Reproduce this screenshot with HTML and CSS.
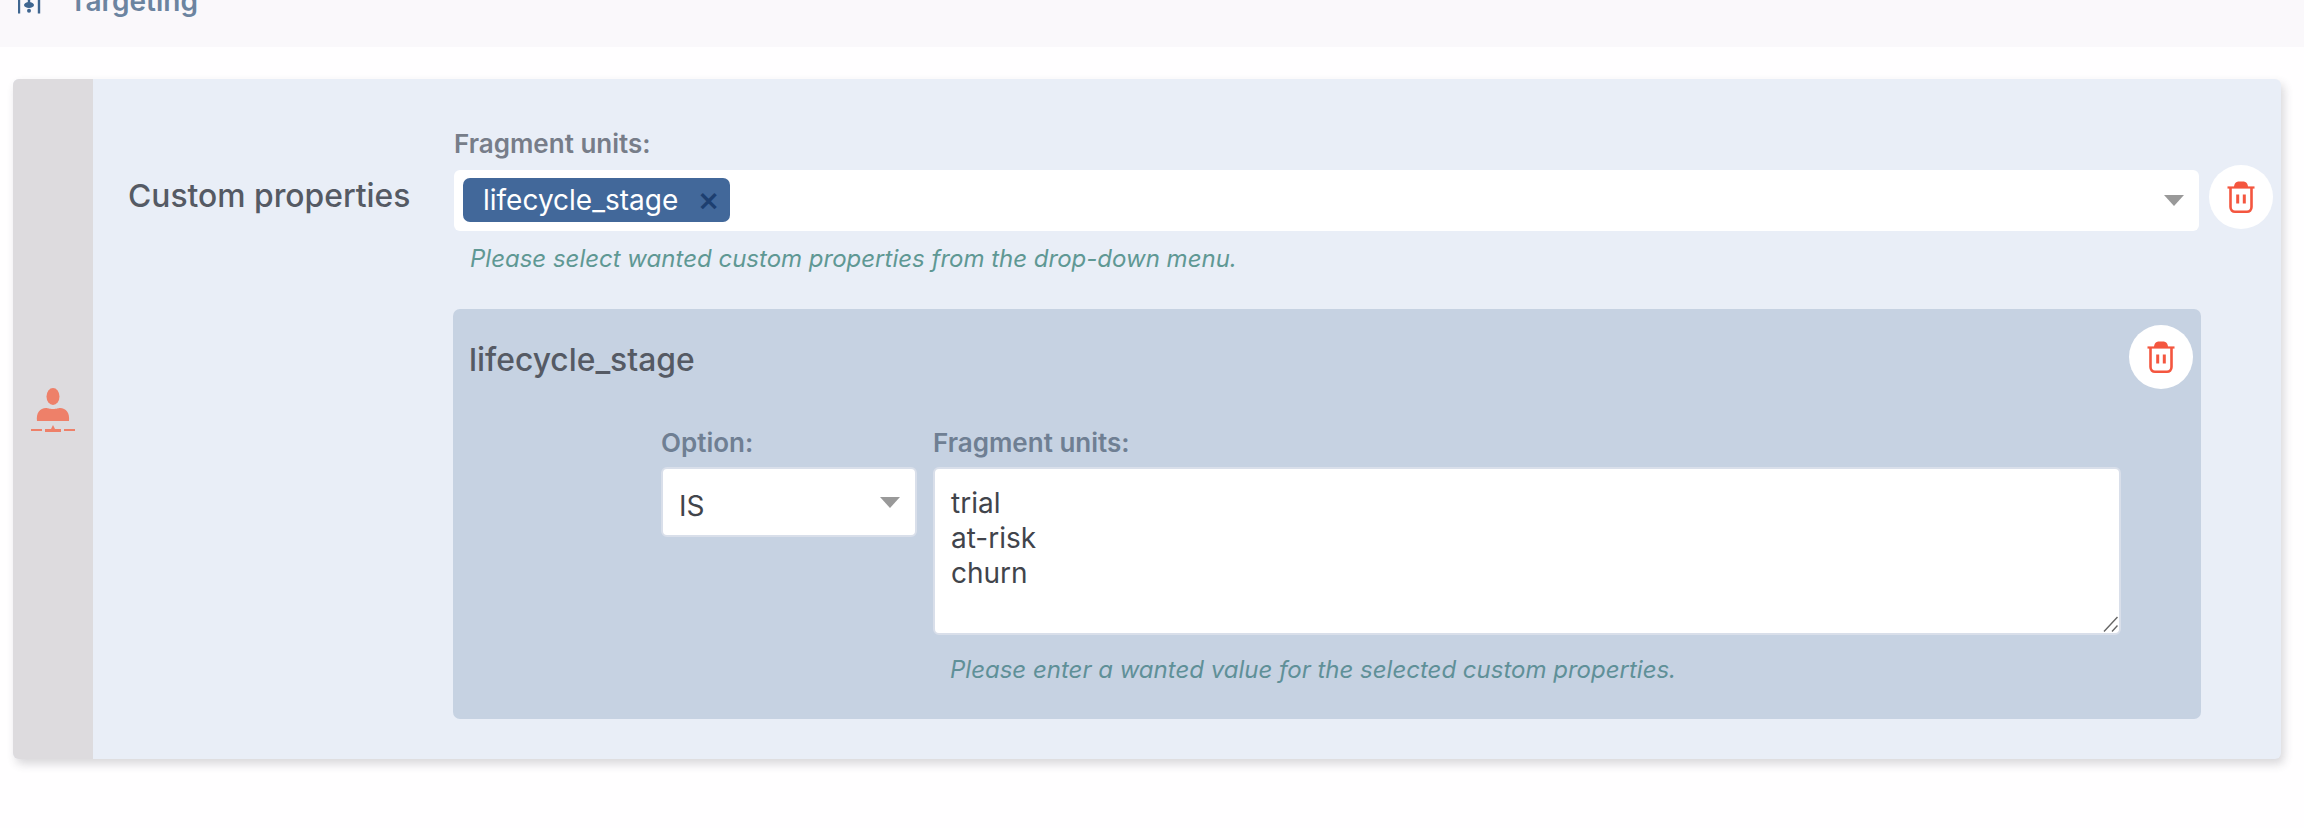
FILE: index.html
```html
<!DOCTYPE html>
<html lang="en">
<head>
    <meta charset="UTF-8">
    <title>Targeting</title>
    <link rel="stylesheet" href="styles.css">
</head>
<body>
    <!-- top bar, cut off by the window -->
    <div class="top-bar">
        <svg class="top-icon" width="24" height="34" viewBox="0 0 24 34">
            <path d="M1 0v33.500M21 0v33.500M11 0v24" stroke="#3f6690" stroke-width="2.400" fill="none"/>
            <ellipse cx="11" cy="25" rx="5" ry="3" fill="#3f6690"/>
            <circle cx="11" cy="30.700" r="2" fill="#3f6690"/>
        </svg>
        <div class="top-title">Targeting</div>
    </div>

    <div class="card">
        <div class="card-side">
            <svg width="44" height="44" viewBox="0 0 44 44">
                <ellipse cx="22" cy="8.500" rx="6.500" ry="8.500" fill="#ee8069"/>
                <path d="M6 33c-1-8 3-13 9-13 2 0 3 1 7 1s5-1 7-1c6 0 10 5 9 13z" fill="#ee8069"/>
                <path d="M0 42h11M33 42h11" stroke="#ee8069" stroke-width="2"/>
                <path d="M14 44v-3h6l2-4 2 4h6v3z" fill="#ee8069"/>
            </svg>
        </div>

        <div class="card-body">
            <div class="card-label">Custom properties</div>

            <div class="card-main">
                <div class="field-label">Fragment units:</div>
                <div class="select-row">
                    <div class="multi-select">
                        <div class="tag">
                            <span class="tag-text">lifecycle_stage</span>
                            <span class="tag-x">×</span>
                        </div>
                        <div class="caret"></div>
                    </div>
                    <button class="trash-btn">
                        <svg class="trash" width="28" height="32" viewBox="0 0 28 32">
                            <path d="M7 6.500C7 2.500 9 .5 12 .5h4c3 0 5 2 5 6z" fill="#f4563f"/>
                            <path d="M.5 6.500h27" stroke="#f4563f" stroke-width="2.200"/>
                            <path d="M3.500 7v19c0 3 2 4.700 4.500 4.700h12c2.500 0 4.500-1.700 4.500-4.700V7" stroke="#f4563f" stroke-width="2.600" fill="none"/>
                            <path d="M10.700 13.500v9M17.300 13.500v9" stroke="#f4563f" stroke-width="3"/>
                        </svg>
                    </button>
                </div>
                <div class="hint hint-top">Please select wanted custom properties from the drop-down menu.</div>

                <div class="panel">
                    <div class="panel-head">
                        <div class="panel-title">lifecycle_stage</div>
                        <button class="trash-btn">
                            <svg class="trash" width="28" height="32" viewBox="0 0 28 32">
                                <path d="M7 6.500C7 2.500 9 .5 12 .5h4c3 0 5 2 5 6z" fill="#f4563f"/>
                                <path d="M.5 6.500h27" stroke="#f4563f" stroke-width="2.200"/>
                                <path d="M3.500 7v19c0 3 2 4.700 4.500 4.700h12c2.500 0 4.500-1.700 4.500-4.700V7" stroke="#f4563f" stroke-width="2.600" fill="none"/>
                                <path d="M10.700 13.500v9M17.300 13.500v9" stroke="#f4563f" stroke-width="3"/>
                            </svg>
                        </button>
                    </div>

                    <div class="panel-fields">
                        <div class="option-col">
                            <div class="field-label field-label-blue">Option:</div>
                            <div class="option-select">
                                <span>IS</span>
                                <div class="caret caret-small"></div>
                            </div>
                        </div>
                        <div class="units-col">
                            <div class="field-label field-label-blue">Fragment units:</div>
                            <div class="units-wrap">
                                <textarea class="units-input">trial
at-risk
churn</textarea>
                                <svg class="resize-grip" width="15" height="16" viewBox="0 0 15 16">
                                    <path d="M1 15.500L14.500 1M9 15.500L14.500 9.500" stroke="#666" stroke-width="1.400" fill="none"/>
                                </svg>
                            </div>
                            <div class="hint hint-panel">Please enter a wanted value for the selected custom properties.</div>
                        </div>
                    </div>
                </div>
            </div>
        </div>
    </div>
</body>
</html>
```

FILE: styles.css
```css
* {
    margin: 0;
    padding: 0;
    box-sizing: border-box;
}

body {
    font-family: Inter, "Liberation Sans", sans-serif;
    background-color: #fffeff;
    height: 828px;
    overflow: hidden;
}

/* top bar */
.top-bar {
    height: 47px;
    background-color: #faf8fb;
    display: flex;
    align-items: flex-end;
    gap: 27px;
    padding: 0 0 33px 18px;
}

.top-icon {
    flex-shrink: 0;
}

.top-title {
    font-size: 28px;
    font-weight: 600;
    line-height: 30px;
    color: #6c84a0;
    margin-bottom: -2px;
}

/* card */
.card {
    display: flex;
    width: 2268px;
    height: 680px;
    margin: 32px 0 0 13px;
    background-color: #e9eef7;
    border-radius: 6px;
    box-shadow: 3px 5px 10px rgba(60, 60, 70, 0.2);
}

.card-side {
    width: 80px;
    flex-shrink: 0;
    background-color: #dddbde;
    border-radius: 6px 0 0 6px;
    display: flex;
    align-items: center;
    justify-content: center;
    padding-bottom: 18px;
}

.card-body {
    flex: 1;
    display: flex;
    padding: 50px 0 0 35px;
}

.card-label {
    width: 326px;
    flex-shrink: 0;
    font-size: 31.800px;
    font-weight: 500;
    line-height: 36px;
    color: #555a64;
    padding-top: 49px;
}

.card-main {
    flex: 1;
    min-width: 0;
}

.field-label {
    font-size: 26px;
    font-weight: 600;
    line-height: 30px;
    color: #777d89;
    margin-bottom: 11px;
}

.field-label-blue {
    color: #6f7f93;
    margin-bottom: 9px;
}

.select-row {
    display: flex;
    align-items: flex-start;
}

.multi-select {
    width: 1745px;
    height: 61px;
    background-color: #fff;
    border-radius: 6px;
    display: flex;
    align-items: center;
    justify-content: space-between;
    padding: 0 15px 0 9px;
}

.tag {
    width: 267px;
    height: 44px;
    margin-top: -1px;
    background-color: #42689a;
    border-radius: 7px;
    display: flex;
    align-items: center;
    justify-content: space-between;
    padding: 0 13px 0 20px;
}

.tag-text {
    font-size: 28px;
    color: #fff;
    line-height: 34px;
}

.tag-x {
    font-size: 34px;
    font-weight: 500;
    line-height: 32px;
    color: #1d3f70;
    margin: -2px -3px 0 0;
}

.caret {
    width: 0;
    height: 0;
    border-left: 10px solid transparent;
    border-right: 10px solid transparent;
    border-top: 11px solid #999;
}

.trash-btn {
    width: 64px;
    height: 64px;
    flex-shrink: 0;
    margin: -5px 0 0 10px;
    border: none;
    border-radius: 50%;
    background-color: #fff;
    display: flex;
    align-items: center;
    justify-content: center;
}

.hint {
    font-size: 24px;
    font-style: italic;
    line-height: 30px;
    color: #5f9894;
}

.hint-top {
    padding: 13px 0 0 16px;
}

/* panel with the selected property */
.panel {
    width: 1748px;
    height: 410px;
    margin: 35px 0 0 -1px;
    background-color: #c6d2e2;
    border-radius: 7px;
}

.panel-head {
    display: flex;
    justify-content: space-between;
    align-items: flex-start;
    padding: 16px 8px 0 16px;
}

.panel-title {
    font-size: 31.800px;
    font-weight: 500;
    line-height: 36px;
    color: #555a64;
    padding-top: 17px;
}

.panel-head .trash-btn {
    margin: 0;
}

.panel-fields {
    display: flex;
    gap: 16px;
    padding: 39px 0 0 208px;
}

.option-col {
    width: 256px;
    flex-shrink: 0;
}

.option-select {
    height: 70px;
    background-color: #fff;
    border: 2px solid #d9dfea;
    border-radius: 6px;
    display: flex;
    justify-content: space-between;
    padding: 19px 15px 0 16px;
    font-size: 28px;
    line-height: 36px;
    color: #41444b;
}

.caret-small {
    margin-top: 9px;
}

.units-col {
    width: 1188px;
}

.units-wrap {
    position: relative;
}

.units-input {
    display: block;
    width: 100%;
    height: 168px;
    background-color: #fff;
    border: 2px solid #d9dfea;
    border-radius: 6px;
    padding: 17px 16px;
    font-family: inherit;
    font-size: 28px;
    line-height: 35px;
    color: #41444b;
    resize: none;
    outline: none;
}

.resize-grip {
    position: absolute;
    right: 3px;
    bottom: 3px;
    pointer-events: none;
}

.hint-panel {
    padding: 20px 0 0 17px;
    color: #5f9098;
}
```
